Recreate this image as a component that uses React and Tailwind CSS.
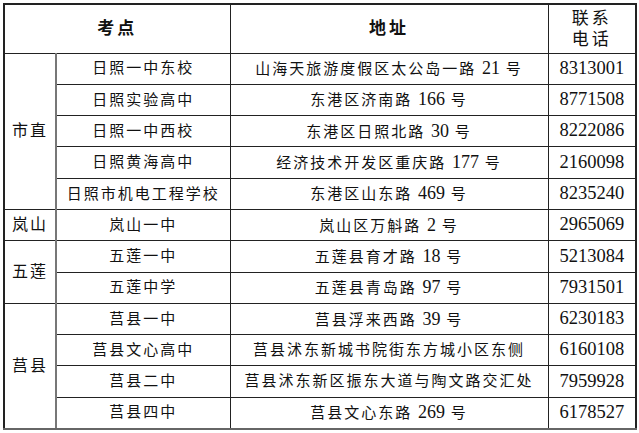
import React from "react";

const rows = [
  { g: "市直", span: 5, name: "日照一中东校", addr: "山海天旅游度假区太公岛一路 21 号", tel: "8313001" },
  { name: "日照实验高中", addr: "东港区济南路 166 号", tel: "8771508" },
  { name: "日照一中西校", addr: "东港区日照北路 30 号", tel: "8222086" },
  { name: "日照黄海高中", addr: "经济技术开发区重庆路 177 号", tel: "2160098" },
  { name: "日照市机电工程学校", addr: "东港区山东路 469 号", tel: "8235240" },
  { g: "岚山", span: 1, name: "岚山一中", addr: "岚山区万斛路 2 号", tel: "2965069" },
  { g: "五莲", span: 2, name: "五莲一中", addr: "五莲县育才路 18 号", tel: "5213084" },
  { name: "五莲中学", addr: "五莲县青岛路 97 号", tel: "7931501" },
  { g: "莒县", span: 4, name: "莒县一中", addr: "莒县浮来西路 39 号", tel: "6230183" },
  { name: "莒县文心高中", addr: "莒县沭东新城书院街东方城小区东侧", tel: "6160108" },
  { name: "莒县二中", addr: "莒县沭东新区振东大道与陶文路交汇处", tel: "7959928" },
  { name: "莒县四中", addr: "莒县文心东路 269 号", tel: "6178527" },
];

const cjk = { fontFamily: '"Liberation Serif", "Noto Sans CJK SC", serif' };

export default function App() {
  return (
    <div className="w-[639px] h-[433px] bg-white pt-[3px] pl-[3px]" style={cjk}>
      <table className="border-collapse table-fixed w-[632px] text-[#111]">
        <colgroup>
          <col className="w-[52px]" />
          <col className="w-[174px]" />
          <col className="w-[318px]" />
          <col className="w-[88px]" />
        </colgroup>
        <thead>
          <tr className="h-[49px]">
            <th colSpan={2} className="border border-[#222] border-t-2 border-l-2 text-[17px] font-bold tracking-[3px] text-center">
              考点
            </th>
            <th className="border border-[#222] border-t-2 text-[17px] font-bold tracking-[3px] text-center">
              地址
            </th>
            <th className="border border-[#222] border-t-2 border-r-2 text-[17px] font-normal tracking-[3px] leading-[21px] text-center">
              联系
              <br />
              电话
            </th>
          </tr>
        </thead>
        <tbody>
          {rows.map((r, i) => (
            <tr key={i} className="h-[31.3px]">
              {r.g && (
                <td
                  rowSpan={r.span}
                  className={`border border-[#222] border-l-2 border-r-2 border-r-[#777] text-center text-[16px] tracking-[2px] p-0 ${i === 8 ? "border-b-2 border-b-[#666]" : ""}`}
                >
                  {r.g}
                </td>
              )}
              <td className={`border border-[#222] text-center text-[15px] tracking-[2px] p-0 whitespace-nowrap ${i === 11 ? "border-b-2 border-b-[#666]" : ""}`}>
                {r.name}
              </td>
              <td className={`border border-[#222] text-center text-[15px] tracking-[2px] p-0 whitespace-nowrap ${i === 11 ? "border-b-2 border-b-[#666]" : ""}`}>
                {r.addr.split(/(\d+)/).map((s, j) =>
                  /^\d+$/.test(s) ? (
                    <span key={j} className="text-[18px] tracking-normal">{s}</span>
                  ) : (
                    <span key={j}>{s}</span>
                  )
                )}
              </td>
              <td className={`border border-[#222] border-r-2 text-center text-[18.5px] p-0 ${i === 11 ? "border-b-2 border-b-[#666]" : ""}`}>
                {r.tel}
              </td>
            </tr>
          ))}
        </tbody>
      </table>
    </div>
  );
}
